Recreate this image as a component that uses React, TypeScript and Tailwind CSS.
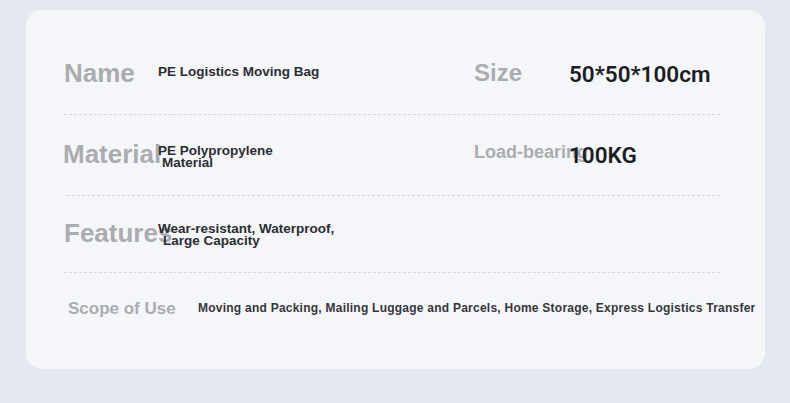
export default function App() {
  const label = 'font-["Liberation_Sans",Arial,sans-serif] font-bold text-[#abacaf] whitespace-nowrap leading-none';
  const value = 'font-["Liberation_Sans",Arial,sans-serif] font-bold text-[13.5px] text-[#2c2d30] leading-[12px]';
  const big = 'font-["Roboto",sans-serif] font-semibold text-[22.5px] text-[#1c1d20] leading-none';

  return (
    <div className="w-[790px] h-[403px] bg-[#e4e8f0] pt-[10px] pl-[26px]">
      <div className="w-[739px] h-[359px] bg-[#f5f6fa] rounded-[16px] pt-[24px] pl-[38px]">
        {/* Name / Size */}
        <div className="flex items-center h-[80px] w-[656px]">
          <div className="w-[94px] shrink-0">
            <span className={`${label} text-[26px]`}>Name</span>
          </div>
          <div className={`${value} w-[316px] shrink-0 -mt-[4px]`}>PE Logistics Moving Bag</div>
          <div className="w-[95px] shrink-0">
            <span className={`${label} text-[24px]`}>Size</span>
          </div>
          <div className={big}>50*50*100cm</div>
        </div>
        <div className="w-[656px] border-t border-dashed border-[#d5d7dc]" />

        {/* Material / Load-bearing */}
        <div className="flex items-center h-[80px] w-[656px]">
          <div className="w-[94px] shrink-0">
            <span className={`${label} text-[26px] -ml-[1px]`}>Material</span>
          </div>
          <div className={`${value} w-[316px] shrink-0 mt-[4px]`}>
            PE Polypropylene
            <br />
            <span className="ml-[4px]">Material</span>
          </div>
          <div className="w-[95px] shrink-0 -mt-[6px]">
            <span className={`${label} text-[18px]`}>Load-bearing</span>
          </div>
          <div className={big}>100KG</div>
        </div>
        <div className="w-[653px] border-t border-dashed border-[#d5d7dc] ml-[3px]" />

        {/* Features */}
        <div className="flex items-center h-[76px] w-[656px]">
          <div className="w-[94px] shrink-0">
            <span className={`${label} text-[26px]`}>Features</span>
          </div>
          <div className={`${value} w-[316px] shrink-0 mt-[2px]`}>
            Wear-resistant, Waterproof,
            <br />
            <span className="ml-[5px]">Large Capacity</span>
          </div>
        </div>
        <div className="w-[656px] border-t border-dashed border-[#d5d7dc]" />

        {/* Scope of Use */}
        <div className="flex items-center h-[70px]">
          <div className="w-[134px] shrink-0 pl-[4px]">
            <span className={`${label} text-[17px]`}>Scope of Use</span>
          </div>
          <div className='font-["Liberation_Sans",Arial,sans-serif] font-bold text-[12px] text-[#35363a] whitespace-nowrap tracking-[0.24px]'>
            Moving and Packing, Mailing Luggage and Parcels, Home Storage, Express Logistics Transfer
          </div>
        </div>
      </div>
    </div>
  );
}
